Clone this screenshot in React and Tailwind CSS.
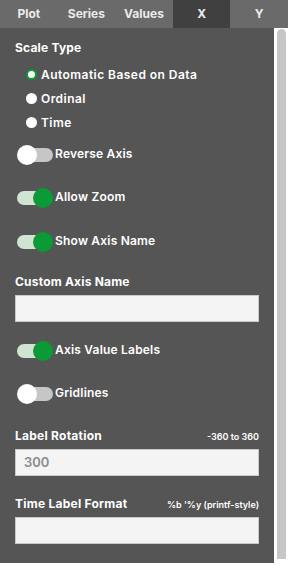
import React from "react";

const font = { fontFamily: "Inter, 'Noto Sans', 'Liberation Sans', sans-serif" };

function Toggle({ on, label, className = "" }) {
  return (
    <div className={"flex items-center h-[20px] " + className}>
      <div className="relative w-[38px] h-[20px] ml-[17px] shrink-0">
        {on ? (
          <>
            <div className="absolute left-0 top-[3px] w-[34px] h-[14px] rounded-full bg-[#cfe5d2]" />
            <div className="absolute left-[16px] top-0 w-[20px] h-[20px] rounded-full bg-[#0b9a35]" />
          </>
        ) : (
          <>
            <div className="absolute left-[4px] top-[3px] w-[32px] h-[14px] rounded-full bg-[#c6c6c6]" />
            <div className="absolute left-0 top-0 w-[20px] h-[20px] rounded-full bg-white" />
          </>
        )}
      </div>
      <span className="text-[12px] font-semibold tracking-[0.2px] text-white leading-[16px] -translate-y-[1px]">{label}</span>
    </div>
  );
}

function Radio({ checked, label }) {
  return (
    <div className="flex items-center h-[24px] pl-[11px]">
      {checked ? (
        <div className="w-[11px] h-[11px] rounded-full border-[2.5px] border-[#0b9a35] bg-white -translate-y-[1px]" />
      ) : (
        <div className="w-[11px] h-[11px] rounded-full bg-white -translate-y-[1px]" />
      )}
      <span className="ml-[4px] text-[12px] font-semibold tracking-[0.45px] text-white leading-[16px]">{label}</span>
    </div>
  );
}

function Input({ value, className = "" }) {
  return (
    <div className={"h-[27px] bg-[#f4f4f4] border border-[#c9c9c9] flex items-center pl-[8px] text-[13px] font-semibold text-[#8c8c8c] " + className}>
      {value}
    </div>
  );
}

export default function App() {
  const tabs = ["Plot", "Series", "Values", "X", "Y"];
  return (
    <div style={font} className="w-[288px] h-[565px] flex flex-col bg-white overflow-hidden">
      <div className="h-[28px] flex bg-[#6a6a6a] shrink-0">
        {tabs.map((t) => (
          <div
            key={t}
            className={
              "flex-1 flex items-center justify-center text-[12px] font-bold text-[#ececec] " +
              (t === "X" ? "bg-[#404040]" : "")
            }
          >
            {t}
          </div>
        ))}
      </div>
      <div className="flex flex-1 min-h-0">
        <div className="w-[274px] h-[535px] bg-[#555555] flex flex-col pl-[15px] pr-[15px] pt-[12px]">
          <div className="text-[12px] font-bold tracking-[0.2px] text-white leading-[16px]">Scale Type</div>
          <div className="mt-[7px]">
            <Radio checked label="Automatic Based on Data" />
            <Radio label="Ordinal" />
            <Radio label="Time" />
          </div>
          <div className="-ml-[15px]">
            <Toggle on={false} label="Reverse Axis" className="mt-[10px]" />
            <Toggle on label="Allow Zoom" className="mt-[23px]" />
            <Toggle on label="Show Axis Name" className="mt-[24px]" />
          </div>
          <div className="mt-[22px] text-[12px] font-bold tracking-[0.2px] text-white leading-[16px]">Custom Axis Name</div>
          <Input className="mt-[5px]" />
          <div className="-ml-[15px]">
            <Toggle on label="Axis Value Labels" className="mt-[19px]" />
            <Toggle on={false} label="Gridlines" className="mt-[23px]" />
          </div>
          <div className="mt-[24px] flex items-baseline justify-between leading-[16px]">
            <span className="text-[12px] font-bold tracking-[0.25px] text-white">Label Rotation</span>
            <span className="text-[9px] font-semibold text-white">-360 to 360</span>
          </div>
          <Input value="300" className="mt-[4px]" />
          <div className="mt-[20px] flex items-baseline justify-between leading-[16px]">
            <span className="text-[12px] font-bold tracking-[0.25px] text-white">Time Label Format</span>
            <span className="text-[9px] font-semibold text-white">%b '%y (printf-style)</span>
          </div>
          <Input className="mt-[4px]" />
        </div>
        <div className="w-[14px] bg-white flex justify-center pt-[1px]">
          <div className="w-[9px] h-[530px] rounded-t-full rounded-b-[3px] bg-[#c6c6c6]" />
        </div>
      </div>
    </div>
  );
}
